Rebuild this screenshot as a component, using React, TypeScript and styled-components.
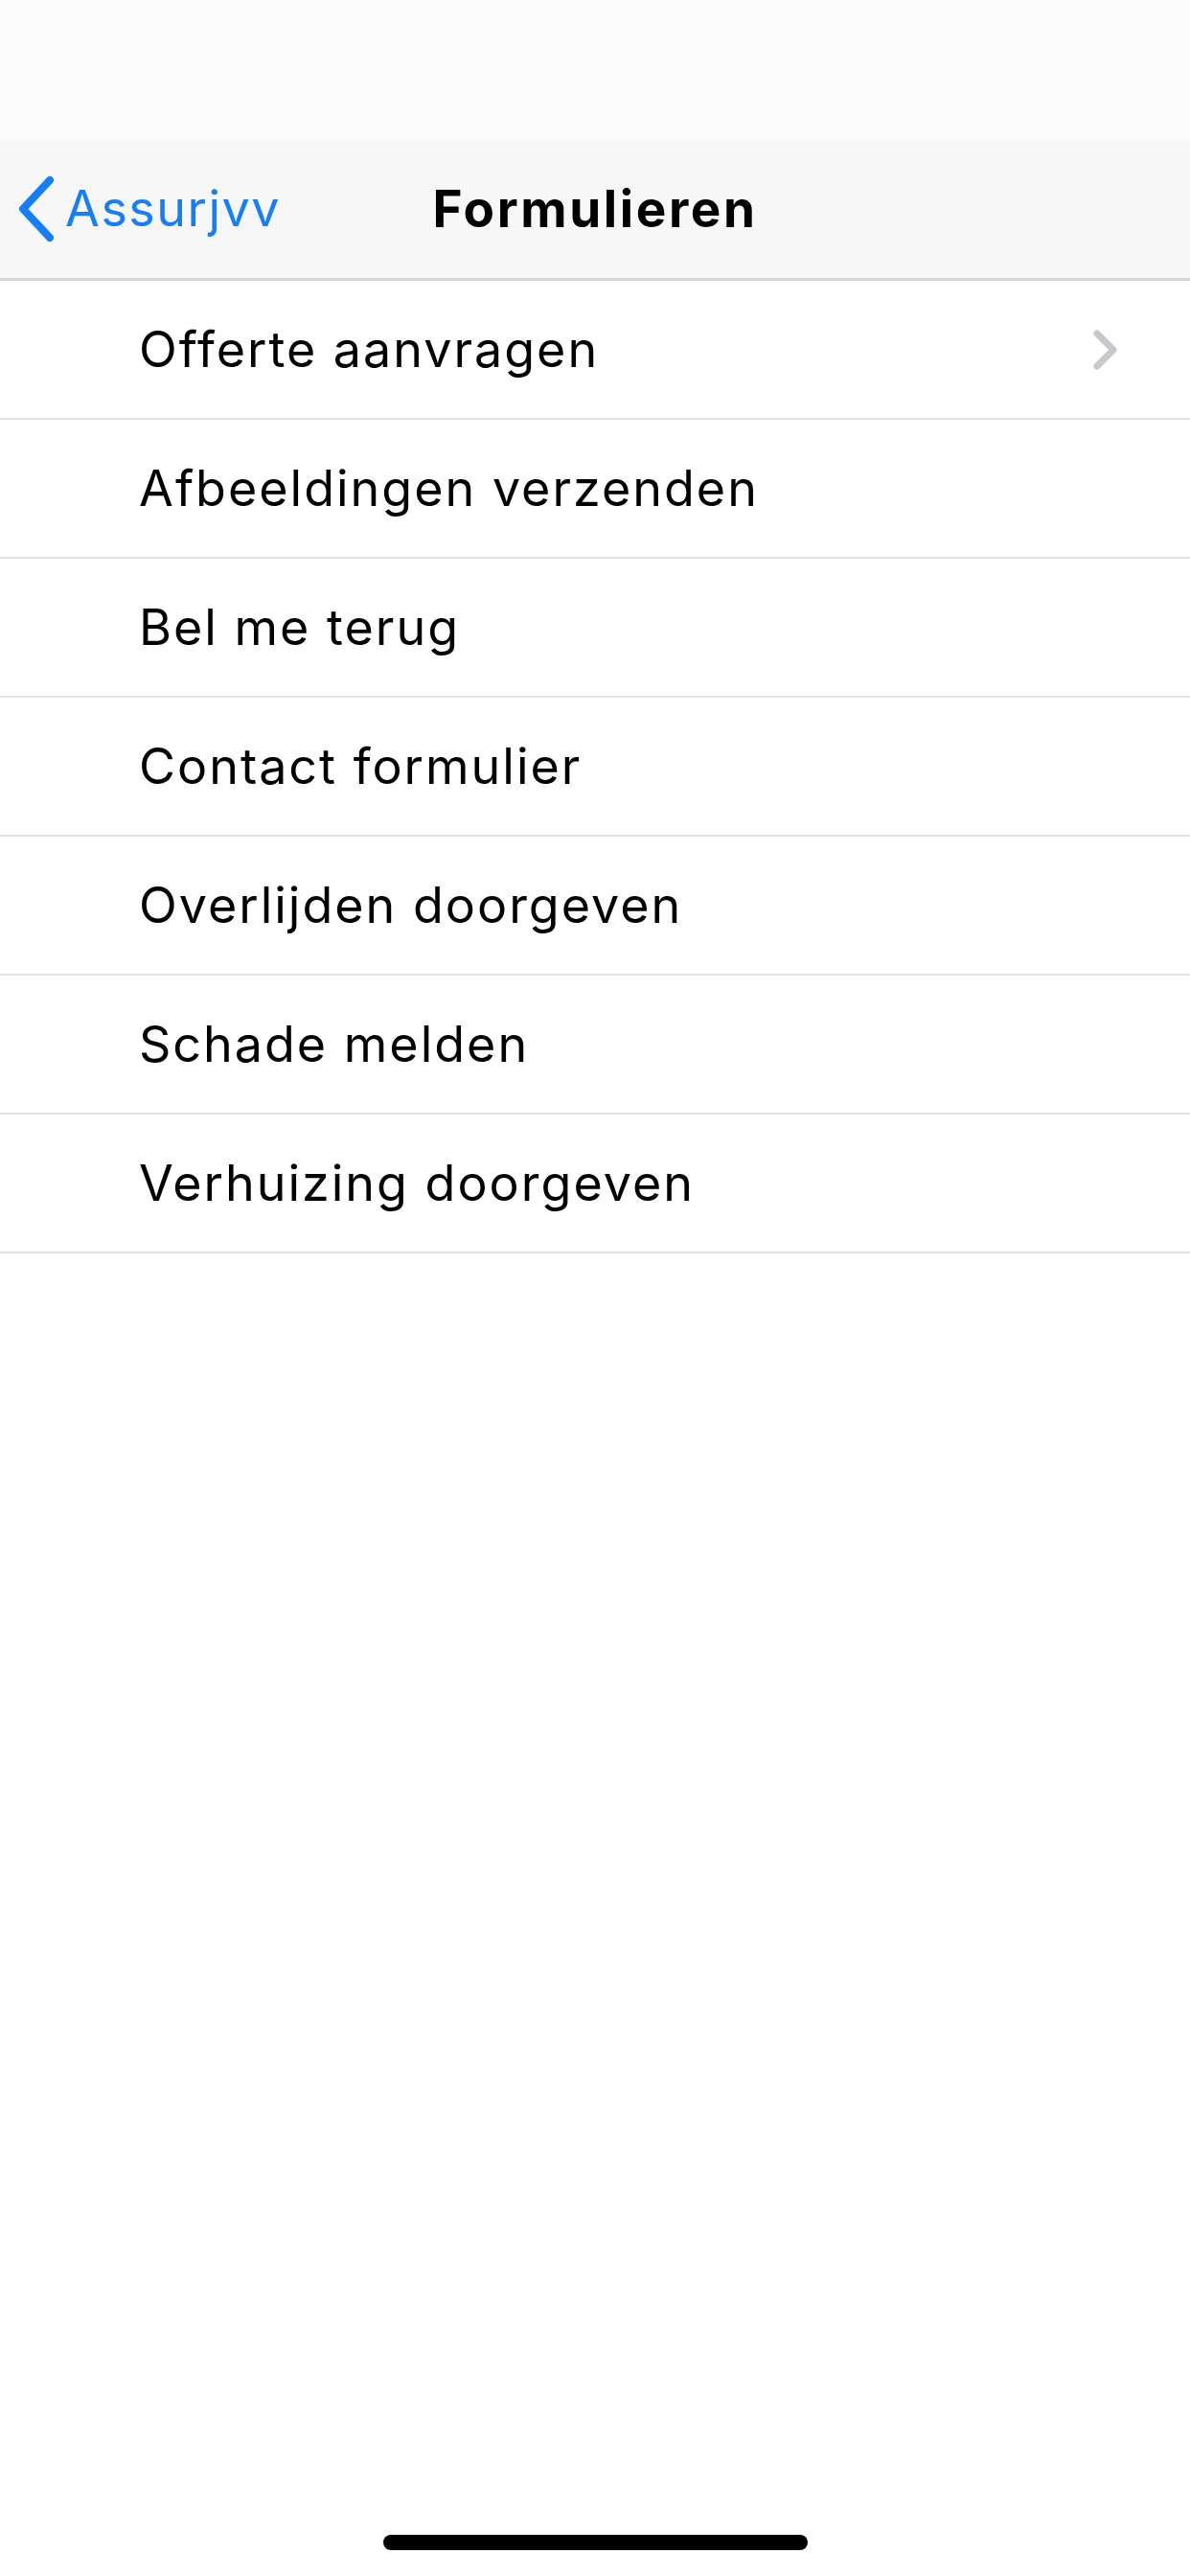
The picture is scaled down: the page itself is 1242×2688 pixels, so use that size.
import React from 'react';
import styled, {createGlobalStyle} from 'styled-components';

const GlobalStyle = createGlobalStyle`
    html, body {
        margin: 0;
        padding: 0;
        background: #ffffff;
    }
    #root {
        width: 1242px;
        height: 2688px;
    }
`;

const forms = [
    'Offerte aanvragen',
    'Afbeeldingen verzenden',
    'Bel me terug',
    'Contact formulier',
    'Overlijden doorgeven',
    'Schade melden',
    'Verhuizing doorgeven',
];

const BackChevron = () => (
    <svg width="42" height="72" viewBox="0 0 42 72">
        <path d="M36 6 L8 36 L36 66" fill="none" stroke="#147efb" strokeWidth="8" strokeLinecap="round" strokeLinejoin="round"/>
    </svg>
);

const RowChevron = () => (
    <svg width="28" height="44" viewBox="0 0 28 44">
        <path d="M5 5 L22 22 L5 39" fill="none" stroke="#c7c7cc" strokeWidth="7" strokeLinecap="round" strokeLinejoin="round"/>
    </svg>
);

const App: React.FC = () => {
    return (
        <Screen>
            <GlobalStyle/>
            <StatusBar/>

            {/* Navigatiebalk */}
            <NavBar>
                <BackButton>
                    <BackChevron/>
                    <BackLabel>Assurjvv</BackLabel>
                </BackButton>
                <NavTitle>Formulieren</NavTitle>
            </NavBar>

            <List>
                {forms.map((name, index) => (
                    <Row key={name}>
                        <RowLabel>{name}</RowLabel>
                        {index === 0 && <RowChevron/>}
                    </Row>
                ))}
            </List>

            <Spacer/>
            <HomeBar/>
        </Screen>
    );
};

const Screen = styled.div`
    width: 1242px;
    height: 2688px;
    display: flex;
    flex-direction: column;
    background: #ffffff;
    font-family: "Inter", "Roboto", "Liberation Sans", sans-serif;
    overflow: hidden;
`;

const StatusBar = styled.div`
    height: 145px;
    background: #fbfbfb;
    flex-shrink: 0;
`;

const NavBar = styled.div`
    position: relative;
    height: 145px;
    flex-shrink: 0;
    display: flex;
    align-items: center;
    justify-content: center;
    background: #f7f7f7;
    border-bottom: 3px solid #d6d6d6;
`;

const BackButton = styled.div`
    position: absolute;
    left: 16px;
    top: 0;
    bottom: 0;
    display: flex;
    align-items: center;
    gap: 10px;
    color: #147efb;
`;

const BackLabel = styled.span`
    font-size: 52px;
    letter-spacing: 1.5px;
`;

const NavTitle = styled.span`
    font-size: 53px;
    font-weight: 700;
    color: #000;
    letter-spacing: 2.6px;
`;

const List = styled.div`
    display: flex;
    flex-direction: column;
`;

const Row = styled.div`
    height: 143px;
    display: flex;
    align-items: center;
    justify-content: space-between;
    padding: 0 74px 0 145px;
    border-bottom: 2.5px solid #e1e1e1;
`;

const RowLabel = styled.span`
    font-size: 52px;
    color: #000;
    letter-spacing: 2px;
`;

const Spacer = styled.div`
    flex: 1;
`;

const HomeBar = styled.div`
    align-self: center;
    width: 443px;
    height: 16px;
    border-radius: 8px;
    background: #000;
    margin-bottom: 27px;
`;

export default App;
